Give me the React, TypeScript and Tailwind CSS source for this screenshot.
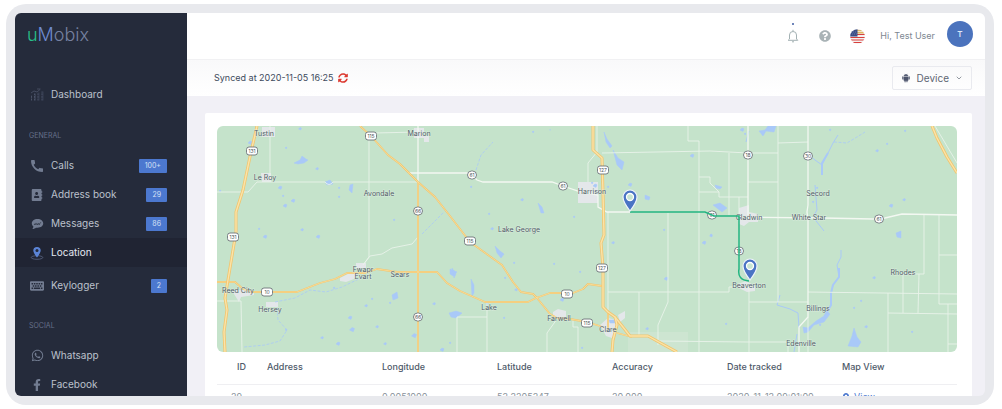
import type { ReactNode } from 'react';
import { AiFillAndroid } from 'react-icons/ai';
import { FaAddressBook, FaFacebookF, FaKeyboard, FaMapMarkerAlt, FaQuestionCircle, FaSyncAlt, FaWhatsapp } from 'react-icons/fa';
import { MdCall } from 'react-icons/md';
import { ChevronDown } from 'lucide-react';
import clsx from 'clsx';

interface NavItem {
  label: string;
  icon: ReactNode;
  badge?: string;
  active?: boolean;
}

const ChartIcon = () => (
  <svg viewBox="0 0 14 13" className="w-[14px] h-[13px]" fill="none" stroke="currentColor">
    <path d="M1.5 12.5V7M4.5 12.5V5.5M8 12.5V4.5M12 12.5V3.5" strokeDasharray="2 .6" />
    <path d="M5.5 12.5V5.5M9 12.5V4.5M13 12.5V3.5" strokeWidth=".5" />
    <path d="M1 5l3-2 3 1 3-2.5M7 1h3.5" strokeWidth=".8" />
  </svg>
);

const MessageIcon = () => (
  <svg viewBox="0 0 14 13" className="w-[13px] h-3">
    <path d="M7 1C3.300 1 .8 3 .8 5.800c0 1.500.7 2.700 1.900 3.600L1.500 12c1.700-.2 3-.8 3.800-1.500.5.100 1.100.1 1.700.1 3.700 0 6.200-2 6.200-4.800S10.700 1 7 1z" fill="currentColor" />
    <path d="M3.500 7.500c.5-2 1.500-2 1.800-.2.400-1.800 1.500-1.800 1.900 0 .3-1.800 1.300-1.800 1.700 0 .5-1.500 1.200-2 1.700-2.700" fill="none" stroke="#252b3b" strokeWidth=".8" />
  </svg>
);

const LocationIcon = () => (
  <svg viewBox="0 0 14 14" className="w-[14px] h-[14px]">
    <ellipse cx="7" cy="11.500" rx="5.800" ry="1.800" fill="none" stroke="#5a6684" strokeWidth=".8" />
    <path d="M7 11.500S3.300 7 3.300 4.600a3.700 3.700 0 017.400 0C10.700 7 7 11.500 7 11.500z" fill="#5b84d6" />
    <circle cx="7" cy="4.500" r="1.500" fill="#252b3b" />
  </svg>
);

const BellIcon = () => (
  <svg viewBox="0 0 12 14" className="w-3 h-[14px]" fill="none" stroke="#a3b1b3">
    <path d="M6 .8v1.400M2.500 10V6a3.500 3.500 0 017 0v4l1.300 1.300H1.200L2.500 10zM5 12.800h2" strokeLinejoin="round" />
  </svg>
);

const FlagIcon = () => (
  <svg viewBox="0 0 15 15" className="w-[15px] h-[15px]">
    <clipPath id="flag"><circle cx="7.500" cy="7.500" r="7.300" /></clipPath>
    <g clipPath="url(#flag)">
      <path fill="#f4f1f1" d="M0 0h15v15H0z" />
      <path stroke="#d8403c" strokeWidth="1.200" d="M7 5.500h8M0 8.500h15M0 11h15M0 13.500h15" />
      <path stroke="#e0b866" strokeWidth="1.500" d="M7 1.500h8M7 3.700h8" />
      <path fill="#3c4f86" d="M0 0h7.500v7.400H0z" />
      <path stroke="#8b9ccc" strokeWidth=".6" strokeDasharray=".8 1.200" d="M1 3h6M2 5h5" />
    </g>
  </svg>
);

const general: NavItem[] = [
  { label: 'Calls', icon: <MdCall className="w-4 h-4" />, badge: '100+' },
  { label: 'Address book', icon: <FaAddressBook className="w-3 h-3" />, badge: '29' },
  { label: 'Messages', icon: <MessageIcon />, badge: '86' },
  { label: 'Location', icon: <LocationIcon />, active: true },
  { label: 'Keylogger', icon: <FaKeyboard className="w-[14px] h-[14px]" />, badge: '2' },
];

const social: NavItem[] = [
  { label: 'Whatsapp', icon: <FaWhatsapp className="w-[13px] h-[13px]" /> },
  { label: 'Facebook', icon: <FaFacebookF className="w-3 h-3" /> },
];

const NavRow = ({ item }: { item: NavItem }) => (
  <li className={clsx(item.active && 'mb-1')}>
    <a
      href="#"
      className={clsx(
        'flex items-center h-[29px] pl-[14px] pr-5',
        item.active ? 'bg-[#202433] text-[#e4e8f0]' : 'text-[#bcc1cc]'
      )}
    >
      <span className="flex w-4 mr-[6px] justify-center text-[#727c91]">{item.icon}</span>
      <span className="grow">{item.label}</span>
      {item.badge && (
        <span className="rounded-[1px] bg-[#4c78cf] px-[6px] text-[7px] leading-[14px] text-[#d5e0f6]">
          {item.badge}
        </span>
      )}
    </a>
  </li>
);

const Sidebar = () => (
  <aside className="w-[172px] shrink-0 bg-[#252b3b] text-[10px]">
    <div className="h-[67px] pl-3 pt-2 text-lg font-light text-[#7681a0]">
      <span className="text-[#27c08a]">u</span>
      <span className="text-[#6f8cd0]">M</span>obix
    </div>
    <nav>
      <ul>
        <NavRow item={{ label: 'Dashboard', icon: <span className="text-[#4b5368]"><ChartIcon /></span> }} />
      </ul>
      <h2 className="h-[42px] pl-[14px] pt-[21px] text-[7px] leading-3 text-[#66708a]">GENERAL</h2>
      <ul>
        {general.map((item) => <NavRow key={item.label} item={item} />)}
      </ul>
      <h2 className="h-[41px] pl-[14px] pt-5 text-[7px] leading-3 text-[#66708a]">SOCIAL</h2>
      <ul>
        {social.map((item) => <NavRow key={item.label} item={item} />)}
      </ul>
    </nav>
  </aside>
);

// White county roads
const minorRoads = [
  'M270 126V178', 'M217 192H248L257 182H325Q329 187 333 182H418', 'M369 140V257L363 265L370 256L382 254L392 248L412 244L418 237',
  'M375 133L418 132', 'M217 301H241L242 352', 'M597 126V152L588 163V182', 'M602 153L710 151L748 153H778',
  'M688 126V141H699V352', 'M699 177H710V183L719 192V197H748', 'M699 192H719', 'M608 212V310', 'M668 213V302L658 325V345',
  'M608 292H729V287H749V352', 'M639 292V337', 'M658 341L748 342H788V352', 'M729 153V215', 'M739 197V217', 'M778 126V302', 'M778 143L808 142',
  'M748 182H778', 'M749 302H808', 'M924 215V274H903V313', 'M919 274L918 313', 'M939 215V304H957', 'M939 255H957',
  'M808 292L957 294', 'M888 293V352', 'M888 313L957 314', 'M948 304V352', 'M948 344H957', 'M935 126L957 163', 'M808 317V352',
  'M457 352V317H487', 'M487 302V352', 'M557 319L547 333V352', 'M573 320V327H578V352',
];

const mainRoads = [
  'M418 126V182', 'M408 173H470L477 180L483 182H552L563 186L578 191L598 195V207L607 212H630', 'M748 126V215',
  'M808 126V205L807 212L808 220V317L799 327V352', 'M738 217L823 218L873 219L885 218L902 214L957 215',
];

const highways = [
  'M360 126L371 136L388 155L400 164L418 182L435 197L450 216L470 242L502 265L513 282L521 292L533 294L537 298L550 314L557 318L570 319L587 322L603 327',
  'M217 282H235L243 289L252 292H297L320 283L335 279L347 273H365L377 269L397 272H437L447 283L460 291L485 302H528L536 298L550 293H573L583 289L588 284L602 286',
  'M418 182V352', 'M608 312V330', 'M617 333L632 337',
];

const freeways = [
  'M257 126L251 152L243 190L236 212V232L233 250L228 280L225 298L227 310L224 332L225 352',
  'M593 126V150L602 158L603 193L604 235L601 243L603 268V307L608 312L615 317L617 325L613 340L612 352',
  'M615 317L630 336H648L677 352', 'M932 126L937 138L947 157L957 173',
];

const rivers = [
  'M809 155L815 160L822 165V175M822 165L828 153L833 143L838 135', 'M815 185L817 210L813 217L824 231',
  'M780 295L777 305L790 309L798 313L799 328', 'M841 250V257L837 265L839 277L833 285L831 293V305L824 316', 'M797 334L794 352', 'M749 131L746 142',
];

// Creeks that show as broken, thin lines
const creeks = [
  'M834 142L847 143L857 137L865 132', 'M277 308L278 320L287 330L280 341L265 345L244 347', 'M275 302L295 298L310 290L326 292L342 287L365 276',
  'M476 170L481 155L493 142', 'M422 234L432 224L444 212',
];

// Larger lakes, drawn as outlines
const lakes = [
  'M294 163L300 160L302 156L306 159L308 160L304 163L298 164Z', 'M604 132L607 139L612 146L610 148L606 142Z', 'M613 150L618 158L624 162L622 170L617 165Z',
  'M759 131L765 130L768 126H776L774 132L766 131L763 136Z', 'M803 327L808 328L816 321L824 316L827 311L830 314L824 322L814 325L808 332L804 333Z',
  'M852 336L854 328L857 337L861 342L858 347L848 346Z', 'M495 246L500 251L504 254L501 258L497 253Z', 'M471 279L474 285L474 293L472 296Z',
  'M449 313L456 311L462 313L456 318L451 317Z', 'M450 269L457 272L453 276L450 274Z', 'M538 203L542 207L544 213L541 213Z', 'M452 268L456 274L454 278Z',
  'M713 205L720 203L727 208L722 212Z', 'M715 185L722 187L720 189L716 188Z', 'M896 233L901 231V238L897 237Z', 'M392 295L397 292L398 298L393 300Z',
  'M350 185L353 184L352 193L349 190Z', 'M645 195L650 197L649 200L645 199Z', 'M609 320H616V323H610Z', 'M325 182L330 180L333 184L327 185Z',
];

// Small ponds as [x, y, size]
const ponds: [number, number, number][] = [
  [300, 129, 1.500], [286, 148, 1], [250, 143, 2], [317, 169, 1.500], [280, 188, 2], [285, 206, 2], [293, 201, 2], [339, 188, 1], [339, 197, 1], [283, 196, 1],
  [220, 191, 1], [302, 230, 1.500], [318, 237, 2], [259, 229, 1], [265, 237, 2], [350, 318, 2], [352, 330, 2.500], [377, 327, 1.500], [338, 344, 2], [322, 338, 1.500],
  [334, 288, 1], [366, 306, 1.500], [372, 299, 1], [390, 303, 1], [414, 336, 2.500], [434, 304, 1.500], [394, 220, 1], [385, 344, 1.500], [286, 330, 1], [279, 313, 1],
  [533, 132, 1], [522, 200, 1.500], [492, 229, 1.500], [489, 214, 1], [471, 187, 1], [574, 217, 1], [516, 290, 1.500], [505, 278, 1], [487, 304, 1], [504, 318, 1], [514, 263, 1],
  [554, 264, 1], [562, 300, 2], [580, 272, 1], [647, 329, 1.500], [613, 243, 1.500], [666, 279, 2], [704, 243, 2], [711, 236, 1.500], [595, 186, 2], [630, 185, 2], [592, 183, 1], [608, 187, 1],
  [692, 156, 2], [664, 230, 1], [742, 130, 2], [745, 134, 1], [877, 151, 1.500], [887, 144, 1], [905, 131, 1], [891, 206, 2], [904, 200, 1.500], [874, 278, 1.500], [866, 327, 1.500], [861, 301, 1],
  [912, 332, 1], [726, 324, 1], [813, 202, 1], [817, 188, 1], [711, 235, 1], [854, 308, 1], [582, 348, 1], [450, 343, 1], [442, 350, 2], [820, 325, 1], [550, 130, .5], [830, 130, 1],
];

const towns = [
  'M262 127h13v10h-13z', 'M261 173h10v9h-9z', 'M414 128h10v10h-10z', 'M424 136h5v6h-5z', 'M578 182h20v21h-20z', 'M739 208l10-3v7l9 2v8l-9 0l-5 4-5-2z',
  'M356 263h10v5h-10z', 'M340 278l8-4h10l-4 5-8 3-6-1z', 'M232 290h12l10 1v4l-13 2-2 5-5-8z', 'M266 302h12v5h-12z', 'M553 312l5-3 8 2v7h-13z',
  'M600 325l8-7 8 2 1 10-5 8-6-2z', 'M618 315l7-4v7l-5 4z', 'M738 284l8-3 9 5v5l-8 1-8-4z',
];

const labels: [number, number, string][] = [
  [264, 135, 'Tustin'], [265, 179, 'Le Roy'], [419, 135, 'Marion'], [379, 195, 'Avondale'], [519, 231, 'Lake George'], [592, 193, 'Harrison'],
  [363, 271, 'Fwapr'], [363, 278, 'Evart'], [400, 276, 'Sears'], [238, 292, 'Reed City'], [270, 311, 'Hersey'], [489, 309, 'Lake'], [559, 320, 'Farwell'],
  [608, 331, 'Clare'], [749, 219, 'Gladwin'], [818, 195, 'Secord'], [809, 219, 'White Star'], [903, 274, 'Rhodes'], [749, 287, 'Beaverton'],
  [818, 310, 'Billings'], [801, 345, 'Edenville'],
];

const shields: [number, number, string][] = [
  [371, 136, '115'], [252, 151, '131'], [233, 237, '131'], [267, 292, '10'], [418, 211, '66'], [418, 317, '66'], [472, 175, '61'], [563, 186, '61'],
  [603, 170, '127'], [470, 241, '115'], [602, 268, '127'], [567, 294, '10'], [587, 323, '115'], [748, 155, '18'], [808, 156, '30'], [879, 219, '61'],
  [712, 215, '61'], [739, 251, '18'],
];

const pins = [[630, 212], [750, 281]];

const TrackMap = () => (
  <svg viewBox="217 126 740 226" className="block w-full rounded-md bg-[#c5e3cb]" role="img" aria-label="Tracked route">
    <g fill="#e4e7ea">{towns.map((d) => <path key={d} d={d} />)}</g>
    <path d="M628 332h60v20h-60z" fill="#cde5d1" />
    <g fill="#a9c9f8" stroke="#a9c9f8" strokeLinejoin="round" strokeWidth=".5">
      {lakes.map((d) => <path key={d} d={d} />)}
      {ponds.map(([x, y, s], i) => (
        <path key={i} d={`M${x - s} ${y}l${s} ${-s}l${s} ${s * 0.4}l${-s * 0.5} ${s * 1.3}z`} />
      ))}
    </g>
    <g fill="none" stroke="#a9c9f8" strokeWidth="1">{rivers.map((d) => <path key={d} d={d} />)}</g>
    <g fill="none" stroke="#a9c9f8" strokeWidth=".8" strokeDasharray="3 1.500">{creeks.map((d) => <path key={d} d={d} />)}</g>
    <path d="M839 268V277L833 285L831 293V305L826 314M828 153L822 163V175" fill="none" stroke="#a9c9f8" strokeWidth="2" />
    <g fill="none" stroke="#e9f3ea" strokeWidth=".9">{minorRoads.map((d) => <path key={d} d={d} />)}</g>
    <g fill="none" stroke="#f3f8f2" strokeWidth="1.300">{mainRoads.map((d) => <path key={d} d={d} />)}</g>
    <g fill="none" stroke="#f1c56e" strokeWidth="1.800" strokeLinejoin="round">{highways.map((d) => <path key={d} d={d} />)}</g>
    <g fill="none" stroke="#fae3a5" strokeWidth=".7" strokeLinejoin="round">{highways.map((d) => <path key={d} d={d} />)}</g>
    <g fill="none" stroke="#f1c56e" strokeWidth="3" strokeLinejoin="round">{freeways.map((d) => <path key={d} d={d} />)}</g>
    <g fill="none" stroke="#fbe3a8" strokeWidth="1.400" strokeLinejoin="round">{freeways.map((d) => <path key={d} d={d} />)}</g>
    {shields.map(([x, y, n]) => {
      const w = n.length > 2 || n === '10' ? 11 : 9;
      return (
        <g key={`${x}-${y}`}>
          <rect x={x - w / 2} y={y - 4} width={w} height="8" rx={w > 9 ? 2.5 : 4} fill="#fff" stroke="#6d7479" strokeWidth=".9" />
          <text x={x} y={y + 2} textAnchor="middle" fontSize="5" fill="#4f565c">{n}</text>
        </g>
      );
    })}
    <g fontSize="7" fill="#525c68" stroke="#e6f2e9" strokeWidth="1" strokeOpacity=".6" paintOrder="stroke" textAnchor="middle">
      {labels.map(([x, y, name]) => <text key={name} x={x} y={y + 1}>{name}</text>)}
    </g>
    <path d="M630 212H705L714 216H739V269Q737 280 749 281" fill="none" stroke="#23b581" strokeWidth="1.500" />
    {pins.map(([x, y]) => (
      <g key={x} transform={`translate(${x} ${y})`}>
        <path d="M0-1S-7-10-7-15A7 7 0 017-15C7-10 0-1 0-1z" fill="#4a74c4" stroke="#eef3fa" strokeWidth="1.200" />
        <circle cy="-15" r="3.500" fill="#c9e5d3" stroke="#fff" strokeWidth="1.300" />
      </g>
    ))}
  </svg>
);

const columns = ['ID', 'Address', 'Longitude', 'Latitude', 'Accuracy', 'Date tracked', 'Map View'];
const rows = [['29', '', '0.0051000', '52.2205247', '20.000', '2020-11-12 09:01:00']];

const TopBar = () => (
  <header className="flex h-[46px] items-center justify-end bg-white pr-3 text-[9px] text-[#7d8791]">
    <button aria-label="Notifications" className="relative mr-5">
      <BellIcon />
      <span className="absolute -top-[6px] left-[5px] h-[2px] w-[2px] rounded-full bg-[#3f5da3]" />
    </button>
    <button aria-label="Help" className="mr-[19px]">
      <FaQuestionCircle className="h-3 w-3 text-[#a9b3b6]" />
    </button>
    <button aria-label="Language" className="mr-[15px]">
      <FlagIcon />
    </button>
    <span className="mr-3">Hi, Test User</span>
    <span className="mb-1 flex h-[26px] w-[26px] items-center justify-center rounded-full bg-[#4b73bd] text-[8px] font-semibold text-[#dce6f7]">
      T
    </span>
  </header>
);

const App = () => (
  <div className="h-screen bg-white py-1 pl-[6px] pr-2 font-['Inter',sans-serif]">
    <div className="h-full rounded-[20px] bg-[#e8e9ed] p-[9px]">
      <div className="flex h-full overflow-hidden rounded-md bg-[#f1f0f6]">
        <Sidebar />
        <div className="min-w-0 grow">
          <TopBar />
          <div className="flex h-[37px] items-center justify-between border-t border-[#f1f1f3] bg-linear-to-b from-[#f9f9fa] to-white pl-[27px] pr-[13px]">
            <p className="flex items-center gap-1 text-[9px] text-[#3d4a5c]">
              Synced at 2020-11-05 16:25
              <button aria-label="Sync now">
                <FaSyncAlt className="h-[10px] w-[10px] text-[#dc3b32]" />
              </button>
            </p>
            <button className="flex h-6 items-center gap-[6px] rounded-[2px] border border-[#e9eaef] px-2 text-[10px] text-[#5e6673]">
              <AiFillAndroid className="h-[10px] w-[10px] text-[#4b536b]" />
              Device
              <ChevronDown className="h-2 w-2" />
            </button>
          </div>
          <main className="pl-[18px] pr-[13px] pt-[17px]">
            <section className="rounded-[2px] bg-white pb-4 pl-3 pr-[15px] pt-[13px]">
              <TrackMap />
              <table className="w-full table-fixed text-left text-[9px] text-[#4e5a69]">
                <thead>
                  <tr className="h-8 border-b border-[#efeff2]">
                    {columns.map((name) => (
                      <th key={name} className="pb-[2px] font-medium first:w-[50px] first:pl-5">{name}</th>
                    ))}
                  </tr>
                </thead>
                <tbody>
                  {rows.map((row) => (
                    <tr key={row[0]} className="h-[26px] border-b border-[#efeff2] text-[#8a939c]">
                      {row.map((cell, i) => (
                        <td key={i} className="first:pl-[14px]">{cell}</td>
                      ))}
                      <td>
                        <a href="#" className="flex items-center gap-1 text-[#4c78cf]">
                          <FaMapMarkerAlt className="h-2 w-2" />
                          View
                        </a>
                      </td>
                    </tr>
                  ))}
                </tbody>
              </table>
            </section>
          </main>
        </div>
      </div>
    </div>
  </div>
);

export default App;
